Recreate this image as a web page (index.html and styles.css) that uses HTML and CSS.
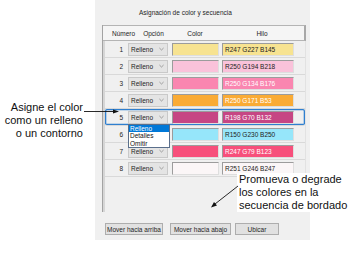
FILE: index.html
```html
<!DOCTYPE html>
<html lang="es">
<head>
    <meta charset="UTF-8">
    <title>Asignación de color y secuencia</title>
    <link rel="stylesheet" href="styles.css">
</head>
<body>

<div class="page">
    <div class="dialog">
        <div class="dialog-title">Asignación de color y secuencia</div>

        <div class="grid">
            <div class="grid-head">
                <span class="h-num">Número</span>
                <span class="h-opt">Opción</span>
                <span class="h-color">Color</span>
                <span class="h-thread">Hilo</span>
            </div>

            <div class="grid-body">
                <div class="row">
                    <span class="num">1</span>
                    <div class="combo"><span>Relleno</span><svg class="chev" viewBox="0 0 6 4"><path d="M0.5 0.8 L3 3.2 L5.5 0.8"/></svg></div>
                    <div class="swatch" style="background:#f7e391"></div>
                    <div class="thread" style="background:#f7e391">R247 G227 B145</div>
                </div>
                <div class="row">
                    <span class="num">2</span>
                    <div class="combo"><span>Relleno</span><svg class="chev" viewBox="0 0 6 4"><path d="M0.5 0.8 L3 3.2 L5.5 0.8"/></svg></div>
                    <div class="swatch" style="background:#fac2da"></div>
                    <div class="thread" style="background:#fac2da">R250 G194 B218</div>
                </div>
                <div class="row">
                    <span class="num">3</span>
                    <div class="combo"><span>Relleno</span><svg class="chev" viewBox="0 0 6 4"><path d="M0.5 0.8 L3 3.2 L5.5 0.8"/></svg></div>
                    <div class="swatch" style="background:#fa86b0"></div>
                    <div class="thread light" style="background:#fa86b0">R250 G134 B176</div>
                </div>
                <div class="row">
                    <span class="num">4</span>
                    <div class="combo"><span>Relleno</span><svg class="chev" viewBox="0 0 6 4"><path d="M0.5 0.8 L3 3.2 L5.5 0.8"/></svg></div>
                    <div class="swatch" style="background:#faab35"></div>
                    <div class="thread light" style="background:#faab35">R250 G171 B53</div>
                </div>
                <div class="row current">
                    <span class="num">5</span>
                    <div class="combo open"><span>Relleno</span><svg class="chev" viewBox="0 0 6 4"><path d="M0.5 0.8 L3 3.2 L5.5 0.8"/></svg>
                        <ul class="combo-list">
                            <li class="picked">Relleno</li>
                            <li>Detalles</li>
                            <li>Omitir</li>
                        </ul>
                    </div>
                    <div class="swatch" style="background:#c64684"></div>
                    <div class="thread light" style="background:#c64684">R198 G70 B132</div>
                </div>
                <div class="row">
                    <span class="num">6</span>
                    <div class="combo"><span>Relleno</span><svg class="chev" viewBox="0 0 6 4"><path d="M0.5 0.8 L3 3.2 L5.5 0.8"/></svg></div>
                    <div class="swatch" style="background:#96e6fa"></div>
                    <div class="thread" style="background:#96e6fa">R150 G230 B250</div>
                </div>
                <div class="row">
                    <span class="num">7</span>
                    <div class="combo"><span>Relleno</span><svg class="chev" viewBox="0 0 6 4"><path d="M0.5 0.8 L3 3.2 L5.5 0.8"/></svg></div>
                    <div class="swatch" style="background:#f74f7b"></div>
                    <div class="thread light" style="background:#f74f7b">R247 G79 B123</div>
                </div>
                <div class="row">
                    <span class="num">8</span>
                    <div class="combo"><span>Relleno</span><svg class="chev" viewBox="0 0 6 4"><path d="M0.5 0.8 L3 3.2 L5.5 0.8"/></svg></div>
                    <div class="swatch" style="background:#fbf6f7"></div>
                    <div class="thread" style="background:#fbf6f7">R251 G246 B247</div>
                </div>
            </div>
        </div>

        <div class="actions">
            <button class="btn btn-up">Mover hacia arriba</button>
            <button class="btn btn-down">Mover hacia abajo</button>
            <button class="btn btn-find">Ubicar</button>
        </div>
    </div>

    <!-- callouts over the screenshot -->
    <div class="callout callout-left">Asigne el color<br>como un relleno<br>o un contorno</div>
    <div class="callout callout-right">Promueva o degrade<br>los colores en la<br>secuencia de bordado</div>

    <svg class="leaders" width="351" height="254" viewBox="0 0 351 254">
        <line x1="84" y1="111.5" x2="114" y2="111.5"/>
        <polygon points="119,111.5 113,109.5 113,113.5"/>
        <line x1="238" y1="186" x2="215" y2="204"/>
        <polygon points="211,207.5 214,202 217,205.5"/>
    </svg>
</div>

</body>
</html>
```

FILE: styles.css
```css
body {
    margin: 0;
    background-color: #fff;
    font-family: 'Liberation Sans', Arial, sans-serif;
}

.page {
    position: relative;
    width: 351px;
    height: 254px;
    overflow: hidden;
}

.dialog {
    margin-left: 95px;
    width: 215px;
    height: 240px;
    background-color: #f0f0f0;
    font-size: 6.5px;
    color: #1e1e1e;
}

.dialog-title {
    height: 25px;
    line-height: 25px;
    padding-left: 44px;
}

.grid {
    margin-left: 7px;
    width: 204px;
    height: 187px;
    box-sizing: border-box;
    border-left: 1px solid #a3a3a3;
    display: flex;
    flex-direction: column;
}

.grid-head {
    display: flex;
    align-items: center;
    height: 16px;
    box-sizing: border-box;
    border: 1px solid #b4b4b4;
    border-left: none;
    border-right: 2px solid #a8a8a8;
    background-color: #f5f5f5;
    padding-left: 3px;
}

.grid-head span {
    text-align: center;
    white-space: nowrap;
}

.h-num { width: 35px; }
.h-opt { width: 25px; }
.h-color { width: 58px; }
.h-thread { width: 76px; }

.grid-body {
    flex: 1;
    border-left: 2px solid #d6d6d6;
    border-right: 1px solid #e2e2e2;
}

.row {
    position: relative;
    display: flex;
    align-items: center;
    height: 17px;
    box-sizing: border-box;
    border-bottom: 1px solid #d9d9d9;
}

.row.current {
    box-shadow: inset 0 0 0 1.3px #2f7fcf;
    border-radius: 2px;
}

.num {
    width: 18px;
    text-align: right;
}

.combo {
    position: relative;
    margin-left: 5px;
    width: 40px;
    height: 13px;
    box-sizing: border-box;
    border: 1px solid #c9c9c9;
    background-color: #e4e4e4;
    display: flex;
    align-items: center;
    padding-left: 2px;
}

.combo span {
    flex: 1;
}

.chev {
    width: 5px;
    height: 4px;
    margin-right: 3px;
    fill: none;
    stroke: #7a7a7a;
    stroke-width: 0.8;
}

.combo-list {
    position: absolute;
    top: 12px;
    left: -1px;
    width: 40px;
    margin: 0;
    padding: 0;
    list-style: none;
    background-color: #fff;
    border: 1px solid #5a6f8c;
    z-index: 2;
}

.combo-list li {
    height: 7.5px;
    line-height: 7.5px;
    padding-left: 1px;
    color: #111;
}

.combo-list li.picked {
    background-color: #0078d7;
    color: #fff;
}

.swatch {
    margin-left: 4px;
    width: 47px;
    height: 13px;
    box-sizing: border-box;
    border: 1px solid;
    border-color: #9c9c9c #dedede #dedede #9c9c9c;
}

.thread {
    margin-left: 3px;
    width: 72px;
    height: 13px;
    box-sizing: border-box;
    border: 1px solid;
    border-color: #9c9c9c #dedede #dedede #9c9c9c;
    padding-left: 2px;
    line-height: 11px;
    white-space: nowrap;
    color: #222;
}

.thread.light {
    color: #fff;
}

.actions {
    display: flex;
    margin-top: 11px;
    padding-left: 10px;
}

.btn {
    height: 12px;
    padding: 0;
    box-sizing: border-box;
    border: 1px solid #adadad;
    background-color: #e1e1e1;
    font-family: 'Liberation Sans', Arial, sans-serif;
    font-size: 6.5px;
    color: #1e1e1e;
    white-space: nowrap;
}

.btn-up { width: 58px; margin-right: 7px; }
.btn-down { width: 61px; margin-right: 4px; }
.btn-find { width: 44px; }

.callout {
    position: absolute;
    font-size: 11px;
    line-height: 13px;
    color: #111;
    white-space: nowrap;
}

.callout-left {
    left: 0;
    top: 101px;
    width: 83px;
    text-align: right;
}

.callout-right {
    left: 237px;
    top: 173px;
    padding: 0 4px 0 2px;
    background-color: #fff;
}

.leaders {
    position: absolute;
    left: 0;
    top: 0;
    pointer-events: none;
}

.leaders line {
    stroke: #111;
    stroke-width: 0.9;
}

.leaders polygon {
    fill: #111;
}
```
